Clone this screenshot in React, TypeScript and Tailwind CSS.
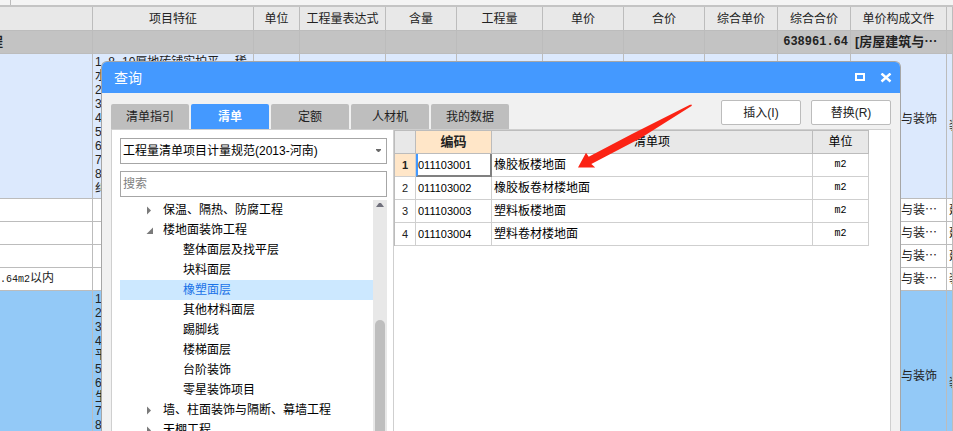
import React, { useState } from "react";

const columns = [
  { name: "", width: "w-[93px]" },
  { name: "项目特征", width: "w-[161px]" },
  { name: "单位", width: "w-[46px]" },
  { name: "工程量表达式", width: "w-[86px]" },
  { name: "含量", width: "w-[71px]" },
  { name: "工程量", width: "w-[86px]" },
  { name: "单价", width: "w-[81px]" },
  { name: "合价", width: "w-[81px]" },
  { name: "综合单价", width: "w-[73px]" },
  { name: "综合合价", width: "w-[73px]" },
  { name: "单价构成文件", width: "w-[96px]" },
  { name: "", width: "" },
];

const rows = [
  {
    style: "h-[145px] bg-[#dce9fd]",
    name: "",
    lines: ["1. 8~10厚地砖铺实拍平， 稀", "水", "2", "3", "4", "5", "6", "7", "8", "纠"],
    file: ["房屋建筑与装饰", "工程"],
    last: "装",
  },
  { style: "h-[23px] bg-white", name: "", lines: [], file: ["房屋建筑与装⋯"], last: "建" },
  { style: "h-[23px] bg-white", name: "", lines: [], file: ["房屋建筑与装⋯"], last: "建" },
  { style: "h-[23px] bg-white", name: "", lines: [], file: ["房屋建筑与装⋯"], last: "建" },
  { style: "h-[23px] bg-white", name: ".64m2", lines: [], file: ["房屋建筑与装⋯"], last: "装" },
  {
    style: "h-[185px] bg-[#93c9f7]",
    name: "",
    lines: ["1", "2", "3", "4", "平", "5", "6", "生", "7", "8"],
    file: ["房屋建筑与装饰", "工程"],
    last: "装",
  },
];

const tabs = ["清单指引", "清单", "定额", "人材机", "我的数据"];

const tree = [
  { label: "保温、隔热、防腐工程", level: 1, open: false },
  { label: "楼地面装饰工程", level: 1, open: true },
  { label: "整体面层及找平层", level: 2 },
  { label: "块料面层", level: 2 },
  { label: "橡塑面层", level: 2 },
  { label: "其他材料面层", level: 2 },
  { label: "踢脚线", level: 2 },
  { label: "楼梯面层", level: 2 },
  { label: "台阶装饰", level: 2 },
  { label: "零星装饰项目", level: 2 },
  { label: "墙、柱面装饰与隔断、幕墙工程", level: 1, open: false },
  { label: "天棚工程", level: 1, open: false },
];

const items = [
  { code: "011103001", name: "橡胶板楼地面" },
  { code: "011103002", name: "橡胶板卷材楼地面" },
  { code: "011103003", name: "塑料板楼地面" },
  { code: "011103004", name: "塑料卷材楼地面" },
];

const Caret = ({ open }: { open?: boolean }) => (
  <svg className="h-2.5 w-2.5 shrink-0" viewBox="0 0 10 10" fill="#7a7a7a">
    {open ? <path d="M7 2.5V9H.5z" /> : <path d="M1 1.5v8L5 5.5z" />}
  </svg>
);

const BackgroundSheet = () => {
  const cell = "border-r border-b border-[#bcbcbc] overflow-hidden whitespace-nowrap";

  return (
    <div className="text-[#222]">
      <div className="h-[7px] bg-[#f4f4f4] border-b-2 border-[#c4c4c4]">
        <div className="h-[5px] w-[11px] border-r border-[#bcbcbc]" />
      </div>
      <table className="w-full table-fixed border-separate border-spacing-0">
        <thead>
          <tr className="h-6 bg-[#e8e8e8]">
            {columns.map((column, index) => (
              <th key={index} className={`${cell} ${column.width} p-0 font-normal`}>
                {column.name}
              </th>
            ))}
          </tr>
        </thead>
        <tbody>
          <tr className="h-[23px] bg-[#c3c3c3] text-[13px] font-bold">
            <td className={`${cell} p-0`}>
              <div className="-ml-2.5">程</div>
            </td>
            {columns.slice(1, 9).map((_, index) => (
              <td key={index} className={`${cell} p-0`} />
            ))}
            <td className={`${cell} p-0 pr-0.5 text-right font-['Liberation_Mono',monospace] text-xs`}>
              638961.64
            </td>
            <td className={`${cell} p-0 pl-1`}>[房屋建筑与⋯</td>
            <td className={`${cell} p-0`} />
          </tr>
          {rows.map((row, index) => (
            <tr key={index} className={row.style}>
              <td className={`${cell} p-0`}>
                {row.name && (
                  <>
                    <span className="font-['Liberation_Mono',monospace] text-[10px]">
                      {row.name}
                    </span>
                    以内
                  </>
                )}
              </td>
              <td className={`${cell} p-0 pt-px pl-0.5 align-top`}>
                {row.lines.map((line, i) => (
                  <div key={i} className="h-3.5">
                    {line}
                  </div>
                ))}
              </td>
              {columns.slice(2, 10).map((_, i) => (
                <td key={i} className={`${cell} p-0`} />
              ))}
              <td className={`${cell} p-0 pl-0.5`}>
                {row.file.map((line) => (
                  <div key={line}>{line}</div>
                ))}
              </td>
              <td className={`${cell} p-0 pl-0.5`}>{row.last}</td>
            </tr>
          ))}
        </tbody>
      </table>
    </div>
  );
};

const App = () => {
  const [activeTab, setActiveTab] = useState("清单");
  const [activeNode, setActiveNode] = useState("橡塑面层");
  const [activeRow, setActiveRow] = useState(0);
  const [search, setSearch] = useState("");

  const gridLine = "border-r border-b border-[#cfcfcf]";

  return (
    <div
      lang="zh-CN"
      className="relative h-screen overflow-hidden bg-white font-['Liberation_Sans','Noto_Sans_CJK_SC',sans-serif] text-xs leading-[14px]"
    >
      <BackgroundSheet />

      <section
        role="dialog"
        aria-labelledby="dialog-title"
        className="absolute top-[61px] right-[52px] bottom-0 left-[101px] flex flex-col overflow-hidden rounded-t-md border border-b-0 border-[#a6a6a6] bg-[#f1f1f1]"
      >
        <header className="flex h-[31px] shrink-0 items-center justify-between bg-[#4499ff] pr-2 pl-3 text-white">
          <h1 id="dialog-title" className="text-sm">
            查询
          </h1>
          <div className="flex gap-3.5">
            <button type="button" aria-label="最大化">
              <svg width="12" height="10" viewBox="0 0 12 10" fill="#fff" fillRule="evenodd">
                <path d="M1 0h10v8H1zM3 2v4h6V2z" />
              </svg>
            </button>
            <button type="button" aria-label="关闭">
              <svg width="12" height="10" viewBox="0 0 12 10" fill="none" stroke="#fff" strokeWidth="2.4">
                <path d="M1.5 .5l9 8M10.5 .5l-9 8" />
              </svg>
            </button>
          </div>
        </header>

        <div className="flex h-9 shrink-0 items-end justify-between px-[9px]">
          <div role="tablist" className="flex gap-0.5">
            {tabs.map((tab) => (
              <button
                key={tab}
                type="button"
                role="tab"
                aria-selected={tab === activeTab}
                onClick={() => setActiveTab(tab)}
                className={`h-[25px] w-[78px] rounded-t-xs ${
                  tab === activeTab
                    ? "bg-[#4499ff] font-bold text-white"
                    : "bg-[#bebebe] text-[#222]"
                }`}
              >
                {tab}
              </button>
            ))}
          </div>
          <div className="flex gap-2.5 pb-1">
            <button
              type="button"
              className="h-[25px] w-20 rounded-xs border border-[#bcbcbc] bg-white text-[#222]"
            >
              插入(I)
            </button>
            <button
              type="button"
              className="h-[25px] w-20 rounded-xs border border-[#bcbcbc] bg-white text-[#222]"
            >
              替换(R)
            </button>
          </div>
        </div>

        <div className="mx-[9px] flex min-h-0 flex-1 border border-b-0 border-[#cfcfcf] bg-white text-black">
          <aside className="flex w-[282px] shrink-0 flex-col border-r border-[#cfcfcf] pt-2 pr-1.5 pl-2">
            <div className="relative">
              <select
                aria-label="清单规范"
                className="h-[26px] w-full appearance-none border border-[#a6a6a6] bg-white pr-5 pl-0.5"
              >
                <option>工程量清单项目计量规范(2013-河南)</option>
              </select>
              <svg
                className="pointer-events-none absolute top-[11px] right-1.5 h-[3px] w-[5px]"
                viewBox="0 0 5 3"
                fill="#6a6a6a"
              >
                <path d="M0 0h5v1L3 3H2L0 1z" />
              </svg>
            </div>
            <input
              type="text"
              aria-label="搜索"
              placeholder="搜索"
              value={search}
              onChange={(event) => setSearch(event.target.value)}
              className="mt-[7px] h-[26px] w-full shrink-0 border border-[#a6a6a6] pl-0.5 placeholder:text-[#808080]"
            />
            <div className="mt-[3px] flex min-h-0 flex-1">
              <ul className="flex-1 overflow-hidden">
                {tree.map((node) => (
                  <li key={node.label}>
                    <button
                      type="button"
                      onClick={() => setActiveNode(node.label)}
                      className={`flex h-5 w-full items-center gap-[7px] ${
                        node.level === 1 ? "pl-[26px]" : "pl-[63px]"
                      } ${node.label === activeNode ? "bg-[#cce8ff] text-[#1a73e8]" : ""}`}
                    >
                      {node.level === 1 && <Caret open={node.open} />}
                      {node.label}
                    </button>
                  </li>
                ))}
              </ul>
              <div className="flex w-3.5 flex-col items-center bg-[#e8e8e8] pt-[3px]">
                <svg className="h-1 w-2" viewBox="0 0 8 4" fill="#70707c">
                  <path d="M0 4L3 0h2l3 4z" />
                </svg>
                <div className="mt-[113px] w-2.5 flex-1 rounded-t-full bg-[#bebebe]" />
              </div>
            </div>
          </aside>

          <div className="flex-1 pr-[21px]">
            <table className="w-full table-fixed border-separate border-spacing-0 border-t border-l border-[#bcbcbc]">
              <thead>
                <tr className="h-[23px] bg-[#e8e8e8]">
                  <th className="w-[21px] border-r border-b border-[#bcbcbc] p-0" />
                  <th className="w-[76px] border-r border-b border-[#bcbcbc] bg-[#ffe6c8] p-0 text-[13px] text-[#222]">
                    编码
                  </th>
                  <th className="border-r border-b border-[#bcbcbc] p-0 font-normal">清单项</th>
                  <th className="w-14 border-r border-b border-[#bcbcbc] p-0 font-normal">单位</th>
                </tr>
              </thead>
              <tbody>
                {items.map((item, index) => (
                  <tr key={item.code} className="h-[23px]" onClick={() => setActiveRow(index)}>
                    <td
                      className={`${gridLine} p-0 text-center text-[11px] text-[#222] ${
                        index === activeRow ? "bg-[#ffe6c8] font-bold" : ""
                      }`}
                    >
                      {index + 1}
                    </td>
                    <td
                      className={`p-0 text-[11px] ${
                        index === activeRow
                          ? "border-r-2 border-b-2 border-l-2 border-[#808080] border-l-[#4499ff]"
                          : `${gridLine} pl-0.5`
                      }`}
                    >
                      {item.code}
                    </td>
                    <td className={`${gridLine} p-0 pl-0.5`}>{item.name}</td>
                    <td className={`${gridLine} p-0 text-center font-['Liberation_Mono',monospace] text-[10px]`}>
                      m2
                    </td>
                  </tr>
                ))}
              </tbody>
            </table>
          </div>
        </div>
      </section>

      <svg
        className="pointer-events-none absolute top-[104px] left-[577px] h-16 w-[116px]"
        viewBox="577 104 116 64"
        fill="#fb2314"
      >
        <path d="M578 167.4L586 152.8L588.7 156.8L632 134L690 104.8L692 104.8L691.5 106L640 138.5L591.3 164L595.2 167.6z" />
      </svg>
    </div>
  );
};

export default App;
